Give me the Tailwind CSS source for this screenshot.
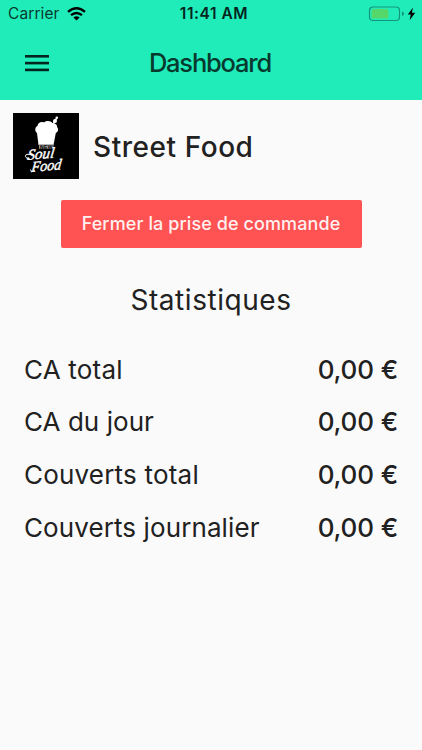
<!DOCTYPE html>
<html lang="fr">
<head>
  <meta charset="UTF-8" />
  <meta name="viewport" content="width=device-width, initial-scale=1.0"/>
  <title>Dashboard</title>
  <script src="https://cdn.jsdelivr.net/npm/@tailwindcss/browser@4"></script>
</head>
<body class="h-[750px] overflow-hidden bg-[#fafafa] font-['Inter',sans-serif] text-[#212121]">
  <header class="h-[100px] bg-[#20ecba]">
    <!-- Status bar -->
    <div class="grid h-7 grid-cols-3 items-center pl-2 pr-1.5">
      <div class="flex items-center gap-[7px] text-[#083b2f]">
        <span class="text-[15.5px] leading-7 tracking-[0.1px]">Carrier</span>
        <svg class="h-[14px] w-[19px] text-black" viewBox="0 0 19 14" fill="none" stroke="currentColor" stroke-width="2.4">
          <path d="M1 4.9Q9.5-2.3 18 4.9"/>
          <path d="M4 8.2Q9.5 3.6 15 8.2"/>
          <path d="M9.5 13.5L6.4 10.4Q9.5 8 12.6 10.4Z" fill="currentColor" stroke="none"/>
        </svg>
      </div>
      <span class="pl-1 text-center text-[15.5px] font-semibold leading-7 tracking-[0.55px] text-[#04251d]">11:41 AM</span>
      <div class="flex items-center justify-end">
        <svg class="h-4 w-[48px]" viewBox="0 0 48 16">
          <rect x="1.5" y="1" width="30" height="13.5" rx="3.5" fill="none" stroke="#14957a" stroke-width="1.2"/>
          <rect x="3.5" y="3" width="17" height="9.5" rx="1.5" fill="#56d769"/>
          <path d="M34 5.5q2 .5 2 2.3t-2 2.3z" fill="#14957a"/>
          <path d="M45 1.5L39.8 8.6h3L41.6 14.3 47.2 6.8h-3.3z" fill="#000"/>
        </svg>
      </div>
    </div>
    <!-- App bar -->
    <div class="grid h-[70px] grid-cols-[48px_1fr_48px] items-center px-[1px]">
      <svg class="ml-6 mt-[1px] h-[17px] w-6" viewBox="0 0 24 17" fill="#04251d">
        <rect width="24" height="2.6"/>
        <rect y="6.8" width="24" height="2.6"/>
        <rect y="13.6" width="24" height="2.6"/>
      </svg>
      <h1 class="-ml-[2px] text-center text-[25.5px] font-medium tracking-[-1.2px] text-[#07392e]">Dashboard</h1>
    </div>
  </header>

  <main>
    <div class="flex items-center gap-[14px] px-[13px] pt-[13px]">
      <svg class="size-[66px] shrink-0 bg-black" viewBox="0 0 66 66">
        <path d="M25.5 32L24 20C21.5 18 21.8 14 24.5 13 24.5 10 28 8 31 9.5 34 7 38 8 39.5 10 42 10 44.5 12 44 14 46 16 45 19 42.8 20L40.5 32Z" fill="#fff"/>
        <path d="M40.5 10L43.5 5.5" stroke="#fff" stroke-width="1.5"/>
        <circle cx="42" cy="8" r="2" fill="#fff"/>
        <circle cx="43.8" cy="4.8" r="1.3" fill="#fff"/>
        <rect x="26" y="31.3" width="14.5" height="4.5" fill="#999"/>
        <text x="27" y="35.5" font-family="Liberation Sans" font-size="5" font-weight="700" textLength="12.5" fill="#000">NEW</text>
        <!-- Script wordmark: slanted lettering with swashes -->
        <g font-family="Liberation Serif" font-style="italic" fill="#fff" stroke="#fff" stroke-width=".4">
          <text transform="translate(14 47) rotate(-5) skewX(-12)" font-size="15" textLength="27" lengthAdjust="spacingAndGlyphs">Soul</text>
          <text transform="translate(18 59) rotate(-5) skewX(-12)" font-size="15" textLength="30" lengthAdjust="spacingAndGlyphs">Food</text>
        </g>
        <path d="M19 42Q12 40 12.5 43.5 13.5 46.5 17 46M22 57.5Q18 60 17.5 56.5" fill="none" stroke="#fff"/>
      </svg>
      <h2 class="pt-[2px] text-[28px] font-medium tracking-[0.55px]">Street Food</h2>
    </div>

    <div class="mt-[21px] flex justify-center">
      <button class="h-[48px] w-[301px] rounded-[2px] bg-[#ff5252] pb-[1px] text-[18px] font-medium tracking-[0.1px] text-[#fff0f0]">Fermer la prise de commande</button>
    </div>

    <h3 class="mt-[30px] text-center text-[28px] leading-[44px] tracking-[0.55px]">Statistiques</h3>

    <dl class="mt-[21.5px] px-6 text-[26px] leading-[52.7px]">
      <div class="flex justify-between">
        <dt class="tracking-[0.2px]">CA total</dt>
        <dd class="font-medium tracking-[-0.15px]">0,00 €</dd>
      </div>
      <div class="flex justify-between">
        <dt class="tracking-[0.05px]">CA du jour</dt>
        <dd class="font-medium tracking-[-0.15px]">0,00 €</dd>
      </div>
      <div class="flex justify-between">
        <dt class="tracking-[0.2px]">Couverts total</dt>
        <dd class="font-medium tracking-[-0.15px]">0,00 €</dd>
      </div>
      <div class="flex justify-between">
        <dt class="tracking-[0.1px]">Couverts journalier</dt>
        <dd class="font-medium tracking-[-0.15px]">0,00 €</dd>
      </div>
    </dl>
  </main>
</body>
</html>
